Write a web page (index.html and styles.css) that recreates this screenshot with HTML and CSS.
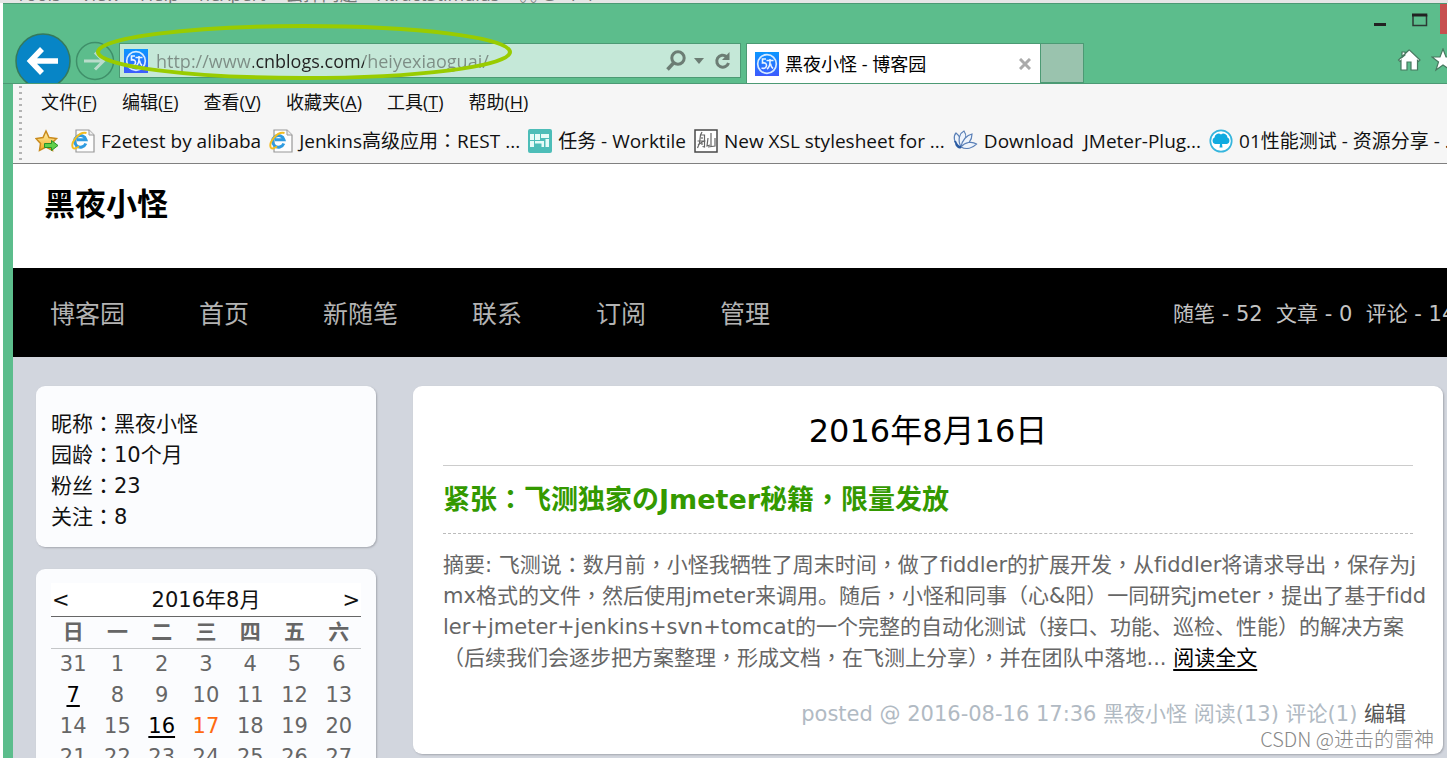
FILE: index.html
```html
<!DOCTYPE html>
<html lang="zh-CN">
<head>
<meta charset="utf-8">
<title>黑夜小怪 - 博客园</title>
<link rel="stylesheet" href="styles.css">
</head>
<body>
<svg class="defs" width="0" height="0" aria-hidden="true">
  <defs>
    <linearGradient id="blue" x1="0" y1="0" x2="0" y2="1"><stop offset="0" stop-color="#0b97ff"/><stop offset="1" stop-color="#3d5afe"/></linearGradient>
    <linearGradient id="gold" x1="0" y1="0" x2="0" y2="1"><stop offset="0" stop-color="#fff3b0"/><stop offset="1" stop-color="#f2a91c"/></linearGradient>
    <symbol id="site" viewBox="0 0 24 24">
      <rect width="24" height="24" fill="url(#blue)"/>
      <circle cx="12" cy="12" r="9.3" fill="none" stroke="#d6ebff" stroke-width="1.7"/>
      <path d="M11 7H7.500v4c3-.5 4 .5 4 2.500S9.500 17 6.500 16M11.500 8.500h7M15 7v3c0 3-1 5.500-3 7M15.500 11.500c.3 2.500 1 4 2.500 5" fill="none" stroke="#e8f4ff" stroke-width="1.600"/>
    </symbol>
    <symbol id="ie" viewBox="0 0 24 24">
      <path d="M5 1h13l5 5v17H5z" fill="#fdfdfd" stroke="#989898" stroke-width="1.200"/>
      <path d="M18 1v5h5" fill="#eee" stroke="#989898"/>
      <path d="M14.800 14.500A5.800 5.800 0 1 1 15 10.800H6" fill="none" stroke="#2e9be0" stroke-width="3"/>
      <path d="M2 19C-1 14 8 2 15.500 4M2 19c1.500 1 4 0 6-1.500" fill="none" stroke="#f3bd20" stroke-width="1.900"/>
    </symbol>
  </defs>
</svg>

<div class="behind"><span>Tools</span><span>View</span><span>Help</span><span>neXpert</span><span>去掉问题</span><span>XtractStimulus</span><span>⌘ G ‑ F 1</span></div>

<div class="window">
  <header class="chrome">
    <div class="titlebar">
      <button class="win" aria-label="最小化"><svg width="12" height="14"><path d="M0 11.500h12" stroke="#222" stroke-width="3"/></svg></button>
      <button class="win" aria-label="最大化"><svg width="16" height="14"><path d="M1 2v10.500h13.500V2" fill="none" stroke="#2c3a34" stroke-width="1.500"/><path d="M0 2h15.300" stroke="#222" stroke-width="3"/></svg></button>
      <button class="close" aria-label="关闭"></button>
    </div>
    <div class="address-row">
      <button class="back" aria-label="后退"><svg viewBox="0 0 56 56"><circle cx="28" cy="28" r="27" fill="#0785c6" stroke="#35795c" stroke-width="1.500"/><path d="M43 28H15M27 16 15.500 28 27 40" fill="none" stroke="#fff" stroke-width="5.500"/></svg></button>
      <button class="forward" aria-label="前进"><svg viewBox="0 0 40 40"><circle cx="20" cy="20" r="18.500" fill="none" stroke="#3f8f69" stroke-width="1.500"/><path d="M9 20h19M20 11.500 28.500 20 20 28.500" fill="none" stroke="#b9dccb" stroke-width="3"/></svg></button>
      <div class="address">
        <svg width="24" height="24"><use href="#site"/></svg>
        <input type="text" aria-label="地址" value="http://www.cnblogs.com/heiyexiaoguai/">
        <button aria-label="搜索"><svg width="20" height="22" fill="none" stroke="#6c7d74" stroke-width="3"><circle cx="12" cy="8" r="6.200"/><path d="M8 12.500 1.500 19.500" stroke-width="3.500"/></svg></button>
        <button aria-label="历史"><svg width="10" height="6"><path d="M0 0h10L5 6z" fill="#6c7d74"/></svg></button>
        <button aria-label="刷新"><svg width="18" height="20"><path d="M12.500 5.500A6 6 0 1 0 14.500 12" fill="none" stroke="#6c7d74" stroke-width="3"/><path d="M15.500 1v8H8z" fill="#6c7d74"/></svg></button>
      </div>
      <div class="tab">
        <svg width="24" height="24"><use href="#site"/></svg>
        <span>黑夜小怪 - 博客园</span>
        <button aria-label="关闭标签页"><svg width="12" height="12"><path d="m1 1 10 10M11 1 1 11" stroke="#aaa" stroke-width="3"/></svg></button>
      </div>
      <button class="newtab" aria-label="新建标签页"></button>
      <div class="tools">
        <button aria-label="主页"><svg width="24" height="24"><path d="M12 2 1.500 12l1.500 1.500 1-1V22h6v-8h4v8h6.500v-9.500l1 1 1.500-1.500-10.500-10zM5 4h3v3L5 9.500z" fill="#fff" stroke="#47785f" stroke-width="1.200"/></svg></button>
        <button aria-label="收藏"><svg width="24" height="24"><path d="m12 1 3 8h8l-6.500 5 2.500 8-7-5-7 5 2.500-8L1 9h8z" fill="#fff" stroke="#47785f" stroke-width="1.200"/></svg></button>
      </div>
    </div>
  </header>

  <div class="bars">
    <div class="grip"></div>
    <div class="rows">
      <nav class="menu">
        <button>文件(<u>F</u>)</button><button>编辑(<u>E</u>)</button><button>查看(<u>V</u>)</button><button>收藏夹(<u>A</u>)</button><button>工具(<u>T</u>)</button><button>帮助(<u>H</u>)</button>
      </nav>
      <nav class="bookmarks">
        <button aria-label="添加到收藏夹栏"><svg width="24" height="24"><path d="m11 2 3 6.500 7.500 1-5 5 1 7L11 18l-6.500 3.500 1-7-4.500-5 7-1z" fill="url(#gold)" stroke="#c98a1c" stroke-width="1.500"/><path d="M9.500 14.500h7v-3l6.500 5-6.500 5v-3h-7z" fill="#5fd04a" stroke="#27902a"/></svg></button>
        <a href="#"><svg width="24" height="24"><use href="#ie"/></svg>F2etest by alibaba</a>
        <a href="#"><svg width="24" height="24"><use href="#ie"/></svg><span>Jenkins高级应用<span class="mid">：</span>REST ...</span></a>
        <a href="#"><svg width="24" height="24"><rect width="24" height="24" rx="2" fill="#4dbdb8"/><path d="M2 5h4v6H2zM7 5h5v6H7zM13 5h8v4h-8zM2 12h4v6H2zM7 12h9v6h-2.500v-3.500H7zM17.500 10H21v8h-3.500z" fill="#e6fbf8"/></svg>任务 - Worktile</a>
        <a href="#"><svg width="24" height="24"><path d="M1 1h22v22H1z" fill="#fff" stroke="#4a4a4a" stroke-width="1.500"/><path d="M8 3 6.500 6 5.500 14l-2 5M6.500 6h4v12l-2-.5M3.500 12h8M8 8v2M8 14v2M14 9l-1 8 3-1M17 4v13M14 18l7-1V9M4 16l7-5" fill="none" stroke="#666" stroke-width="1.200"/></svg>New XSL stylesheet for ...</a>
        <a href="#"><svg width="25" height="24" fill="#eef4fc" stroke="#5b80b7" stroke-width="1.200"><path d="M8 18C-1 14 1 6 3 4c4 3 6 8 5 14z"/><path d="M8 18C4 10 7 4 11 2c3 4 2 10-3 16z"/><path d="M8 18C9 11 14 6 19 5c0 6-4 11-11 13z"/><path d="M8 18c4-5 11-6 15.500-3-4 4-10 6-15.500 3z"/><path d="M2 12c2 5 4 6 6 6M3 15c1 3 3 4 5 3" stroke="#2a5ba2" stroke-width="2"/></svg>Download&nbsp; JMeter-Plug...</a>
        <a href="#"><svg width="24" height="24"><circle cx="12" cy="12" r="10.700" fill="#fff" stroke="#35b5dd" stroke-width="1.700"/><path d="M6 15a3.500 3.500 0 0 1-.5-6.500A4 4 0 0 1 12 5.500a4 4 0 0 1 6.500 3A3.500 3.500 0 0 1 18 15h-5l.5 3.500h-3L11 15z" fill="#10abe0"/></svg>01性能测试 - 资源分享 - ...</a>
      </nav>
    </div>
  </div>

  <div class="page">
    <div class="blog-title"><h1>黑夜小怪</h1></div>
    <nav class="site-nav">
      <a href="#">博客园</a><a href="#">首页</a><a href="#">新随笔</a><a href="#">联系</a><a href="#">订阅</a><a href="#">管理</a>
      <div class="stats">随笔 - 52&nbsp; 文章 - 0&nbsp; 评论 - 14</div>
    </nav>
    <div class="content">
      <aside>
        <section class="card profile">
          <div>昵称<span class="mid">：</span><a href="#">黑夜小怪</a></div>
          <div>园龄<span class="mid">：</span><a href="#">10个月</a></div>
          <div>粉丝<span class="mid">：</span><a href="#">23</a></div>
          <div>关注<span class="mid">：</span><a href="#">8</a></div>
        </section>
        <section class="card calendar">
          <div class="month"><a href="#" aria-label="上个月">&lt;</a><span>2016年8月</span><a href="#" aria-label="下个月">&gt;</a></div>
          <table>
            <thead><tr><th>日</th><th>一</th><th>二</th><th>三</th><th>四</th><th>五</th><th>六</th></tr></thead>
            <tbody>
              <tr><td>31</td><td>1</td><td>2</td><td>3</td><td>4</td><td>5</td><td>6</td></tr>
              <tr><td><a href="#">7</a></td><td>8</td><td>9</td><td>10</td><td>11</td><td>12</td><td>13</td></tr>
              <tr><td>14</td><td>15</td><td><a href="#">16</a></td><td class="today">17</td><td>18</td><td>19</td><td>20</td></tr>
              <tr><td>21</td><td>22</td><td>23</td><td>24</td><td>25</td><td>26</td><td>27</td></tr>
            </tbody>
          </table>
        </section>
      </aside>
      <main class="card post">
        <div class="date">2016年8月16日</div>
        <h2><a href="#">紧张<span class="mid">：</span>飞测独家のJmeter秘籍<span class="mid">，</span>限量发放</a></h2>
        <p>摘要: 飞测说<span class="mid">：</span>数月前<span class="mid">，</span>小怪我牺牲了周末时间<span class="mid">，</span>做了fiddler的扩展开发<span class="mid">，</span>从fiddler将请求导出<span class="mid">，</span>保存为j<br>mx格式的文件<span class="mid">，</span>然后使用jmeter来调用。随后<span class="mid">，</span>小怪和同事<span class="mid">（</span>心&amp;阳<span class="mid">）</span>一同研究jmeter<span class="mid">，</span>提出了基于fidd<br>ler+jmeter+jenkins+svn+tomcat的一个完整的自动化测试<span class="mid">（</span>接口、功能、巡检、性能<span class="mid">）</span>的解决方案<br><span class="mid">（</span>后续我们会逐步把方案整理<span class="mid">，</span>形成文档<span class="mid">，</span>在飞测上分享<span class="mid">），</span>并在团队中落地... <a href="#">阅读全文</a></p>
        <div class="meta">posted @ 2016-08-16 17:36 黑夜小怪 阅读(13) 评论(1) <a href="#">编辑</a></div>
      </main>
    </div>
  </div>
</div>
<svg class="ring" viewBox="0 0 418 58" aria-hidden="true"><ellipse cx="209" cy="29" rx="206" ry="26" fill="none" stroke="#99cc00" stroke-width="4"/></svg>
<div class="watermark">CSDN @进击的雷神</div>
</body>
</html>
```

FILE: styles.css
```css
* { box-sizing: border-box; }
body {
  margin: 0;
  height: 100vh;
  overflow: hidden;
  position: relative;
  background: #fff;
  font-family: "DejaVu Sans", "Noto Sans CJK SC", sans-serif;
  font-size: 21px;
  line-height: 31px;
  font-variant-ligatures: none;
}
button {
  display: flex;
  align-items: center;
  justify-content: center;
  padding: 0;
  border: 0;
  background: none;
  font: inherit;
  color: inherit;
}
a { color: inherit; text-decoration: none; }
svg { flex: none; }
.defs { position: absolute; }
/* Full-width punctuation centred in its box */
.mid {
  font-family: "Noto Sans CJK TC", sans-serif;
  font-feature-settings: "locl" 0;
  line-height: 1;
}

.behind {
  display: flex;
  align-items: flex-end;
  gap: 20px;
  height: 3px;
  padding-left: 16px;
  overflow: hidden;
  background: #e6e6e6;
  color: #777;
  font: 18px/18px "Open Sans", "Noto Sans CJK SC", sans-serif;
  white-space: nowrap;
}
.window {
  margin: 0 1px 0 3px;
  padding-left: 10px;
  border-top: 1px solid #4c9a74;
  background: #5cbd8c;
  overflow: hidden;
}

/* Browser frame */
.chrome {
  margin-left: -10px;
  height: 80px;
  overflow: hidden;
  border-bottom: 1px solid #4c9a74;
}
.titlebar {
  display: flex;
  justify-content: flex-end;
  align-items: flex-start;
  gap: 26px;
  height: 39px;
}
.win { margin-top: 9px; }
.close { width: 7px; height: 30px; margin-left: -14px; background: #c75050; }
.address-row {
  display: flex;
  align-items: flex-start;
  height: 40px;
  padding-left: 12px;
  font: 18px/24px "Open Sans", "Noto Sans CJK SC", sans-serif;
}
.back { width: 56px; height: 56px; margin-top: -10px; }
.back svg { width: 56px; height: 56px; }
.forward { width: 40px; height: 40px; margin: -2px 4px 0; }
.forward svg { width: 40px; height: 40px; }
.address {
  flex: 0 1 622px;
  display: flex;
  align-items: center;
  gap: 8px;
  height: 35px;
  padding: 0 8px 0 4px;
  border: 1px solid #4c9a74;
  background: #c5e8d8;
}
.address input {
  flex: 1;
  min-width: 0;
  padding: 0;
  border: 0;
  outline: 0;
  font: inherit;
  background: linear-gradient(to right, #7d8d85 97px, #222 97px, #222 208px, #7d8d85 208px);
  -webkit-background-clip: text;
  background-clip: text;
  color: transparent;
}
.address button:last-child { margin-left: 2px; }
.tab {
  flex: 0 1 295px;
  display: flex;
  align-items: center;
  gap: 6px;
  height: 40px;
  margin-left: 5px;
  padding: 0 9px 0 8px;
  border: 1px solid #4c9a74;
  border-bottom: 0;
  background: #fff;
  white-space: nowrap;
}
.tab button { margin-left: auto; }
.newtab { width: 43px; height: 40px; border: 1px solid #4c9a74; border-left: 0; background: #9ac3ae; }
.tools { display: flex; gap: 10px; width: 50px; margin: 5px 0 0 auto; overflow: hidden; }

.bars {
  display: flex;
  background: #f6f6f6;
  border-bottom: 1px solid #808080;
  color: #111;
  font: 18px/36px "Open Sans", "Noto Sans CJK SC", sans-serif;
}
.grip {
  flex: none;
  width: 3px;
  margin: 2px 0 0 6px;
  background: repeating-linear-gradient(to bottom, #b4b4b4 0, #b4b4b4 2px, transparent 2px, transparent 6px);
}
.rows { flex: 1; min-width: 0; }
.menu { display: flex; gap: 25px; padding-left: 19px; }
.menu u { text-underline-offset: 2px; }
.bookmarks {
  display: flex;
  align-items: center;
  gap: 8px;
  height: 43px;
  padding: 0 0 2px 13px;
  font-size: 19px;
  white-space: nowrap;
  overflow: hidden;
}
.bookmarks button { margin-right: 4px; }
.bookmarks a { display: flex; align-items: center; gap: 6px; }

/* Blog */
.page { background: #d2d6de; }
.blog-title { height: 104px; padding: 21px 31px; background: #fff; }
h1 { margin: 0; font-size: 31px; line-height: 38px; }
.site-nav {
  display: flex;
  align-items: center;
  gap: 74px;
  height: 89px;
  padding: 4px 0 0 37px;
  background: #000;
  color: #b3b3b3;
  font-size: 25px;
  white-space: nowrap;
  overflow: hidden;
}
.stats { width: 274px; margin-left: auto; overflow: hidden; color: #c4c4c4; font-size: 21px; }
.content { display: flex; gap: 37px; padding: 29px 4px 22px 23px; align-items: flex-start; }
aside { flex: 0 0 340px; display: grid; gap: 22px; }
.card { border-radius: 9px; background: #fbfcfe; box-shadow: 1px 1px 2px #a5a8b0; }
.profile { padding: 23px 15px 14px; color: #111; }
.calendar { padding: 14px 15px; color: #666; }
.month {
  display: flex;
  justify-content: space-between;
  padding: 2px 1px 0;
  background: #fff;
  border-bottom: 1px solid #666;
  color: #111;
}
table { width: 100%; table-layout: fixed; border-collapse: collapse; }
th, td { padding: 0; text-align: center; }
th { border-bottom: 1px solid #c4c6c8; }
td a { color: #000; text-decoration: underline; text-underline-offset: 3px; }
.today { color: #ff6a10; }

.post { flex: 1; min-width: 0; padding: 19px 30px 24px; background: #fff; white-space: nowrap; }
.date { padding-bottom: 7px; border-bottom: 1px solid #ccc; color: #000; font-size: 32px; line-height: 53px; text-align: center; }
h2 { margin: 0 0 16px; border-bottom: 1px dashed #bbb; color: #390; font-size: 27px; line-height: 67px; }
.post p { margin: 0; color: #666; }
.post p a { color: #000; text-decoration: underline; text-underline-offset: 4px; }
.meta { padding: 25px 7px 0 0; color: #b1bac3; text-align: right; }
.meta a { color: #555; }

.ring { position: absolute; left: 95px; top: 23px; width: 418px; height: 58px; }
.watermark {
  position: absolute;
  right: 14px;
  bottom: 4px;
  color: #888;
  font: 20px/30px "Noto Sans CJK SC", sans-serif;
  font-weight: 300;
}
```
